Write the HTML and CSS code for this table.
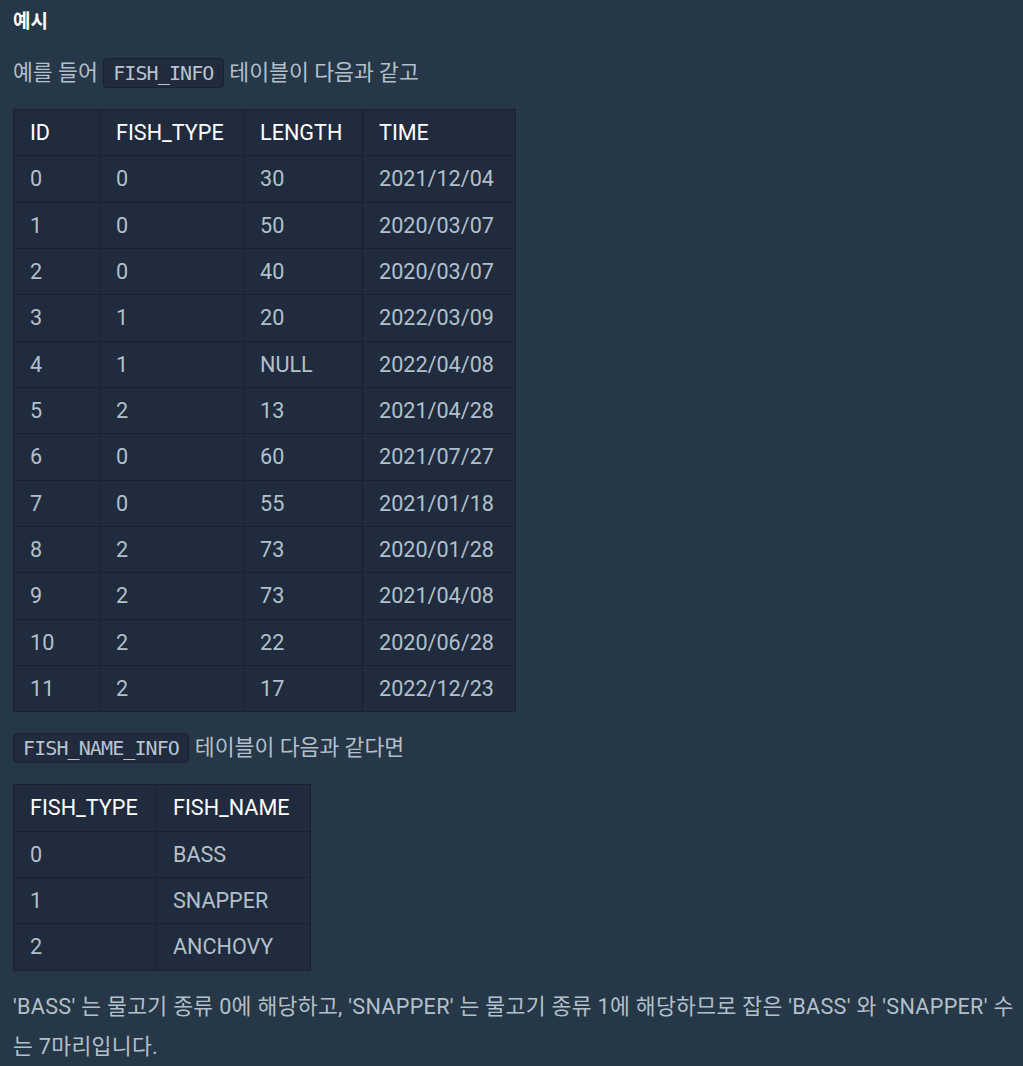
FILE: index.html
```html
<!DOCTYPE html>
<html lang="ko">
<head>
<meta charset="utf-8">
<title>예시</title>
<link rel="stylesheet" href="styles.css">
</head>
<body>
<div class="content">
  <h5 class="title">예시</h5>
  <p class="text">예를 들어 <code class="code">FISH_INFO</code> 테이블이 다음과 같고</p>
  <table class="tbl tbl-info">
    <colgroup>
      <col class="c-id"><col class="c-type"><col class="c-len"><col class="c-time">
    </colgroup>
    <thead>
      <tr><th>ID</th><th>FISH_TYPE</th><th>LENGTH</th><th>TIME</th></tr>
    </thead>
    <tbody>
      <tr><td>0</td><td>0</td><td>30</td><td>2021/12/04</td></tr>
      <tr><td>1</td><td>0</td><td>50</td><td>2020/03/07</td></tr>
      <tr><td>2</td><td>0</td><td>40</td><td>2020/03/07</td></tr>
      <tr><td>3</td><td>1</td><td>20</td><td>2022/03/09</td></tr>
      <tr><td>4</td><td>1</td><td>NULL</td><td>2022/04/08</td></tr>
      <tr><td>5</td><td>2</td><td>13</td><td>2021/04/28</td></tr>
      <tr><td>6</td><td>0</td><td>60</td><td>2021/07/27</td></tr>
      <tr><td>7</td><td>0</td><td>55</td><td>2021/01/18</td></tr>
      <tr><td>8</td><td>2</td><td>73</td><td>2020/01/28</td></tr>
      <tr><td>9</td><td>2</td><td>73</td><td>2021/04/08</td></tr>
      <tr><td>10</td><td>2</td><td>22</td><td>2020/06/28</td></tr>
      <tr><td>11</td><td>2</td><td>17</td><td>2022/12/23</td></tr>
    </tbody>
  </table>
  <p class="text"><code class="code">FISH_NAME_INFO</code> 테이블이 다음과 같다면</p>
  <table class="tbl tbl-name">
    <colgroup>
      <col class="c-ftype"><col class="c-fname">
    </colgroup>
    <thead>
      <tr><th>FISH_TYPE</th><th>FISH_NAME</th></tr>
    </thead>
    <tbody>
      <tr><td>0</td><td>BASS</td></tr>
      <tr><td>1</td><td>SNAPPER</td></tr>
      <tr><td>2</td><td>ANCHOVY</td></tr>
    </tbody>
  </table>
  <p class="text text-wide">'BASS' 는 물고기 종류 0에 해당하고, 'SNAPPER' 는 물고기 종류 1에 해당하므로 잡은 'BASS' 와 'SNAPPER' 수는 7마리입니다.</p>
</div>
</body>
</html>
```
FILE: styles.css
```css
html, body {
  margin: 0;
  padding: 0;
  background: #263747;
}
body {
  font-family: Roboto, "Noto Sans CJK KR", "Noto Sans", sans-serif;
  font-size: 21.6px;
  color: #b2c0cc;
}
.content {
  padding: 8px 4px 0 13px;
}
.title {
  margin: 0 0 17px;
  font-size: 19px;
  line-height: 28px;
  font-weight: 700;
  color: #ffffff;
}
.text {
  margin: 0 0 16px;
  line-height: 40px;
}
.text-wide {
  letter-spacing: 0.3px;
  word-break: break-all;
}
.code {
  font-family: "DejaVu Sans Mono", "Liberation Mono", monospace;
  font-size: 20px;
  letter-spacing: -0.9px;
  line-height: 1.2;
  padding: 2px 9.5px 2px 9px;
  background: #202b3d;
  border: 1px solid #172130;
  border-radius: 4px;
  color: #b7c4d0;
}
.tbl {
  border-collapse: collapse;
  table-layout: fixed;
  background: #202b3d;
  margin: 0 0 16px;
  line-height: 29.33px;
}
.tbl th, .tbl td {
  border: 1px solid #172130;
  padding: 8px 16px;
  text-align: left;
  white-space: nowrap;
}
.tbl th {
  font-weight: 400;
  color: #ffffff;
}
.tbl-info { width: 503px; }
.c-id { width: 86px; }
.c-type { width: 144px; }
.c-len { width: 119px; }
.c-time { width: 153px; }
.tbl-name { width: 298px; }
.c-ftype { width: 143px; }
.c-fname { width: 154px; }
```
